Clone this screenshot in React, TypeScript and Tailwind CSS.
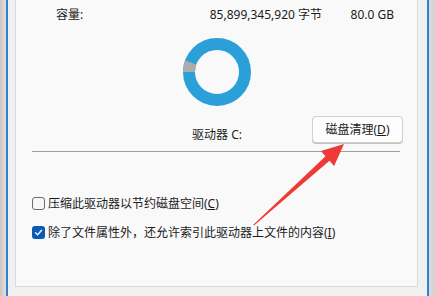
import React from "react";

const font = { fontFamily: '"Noto Sans", "Noto Sans CJK SC", sans-serif' };

function Donut() {
  // used space blue, a small free-space wedge in gray on the left
  const cx = 34;
  const cy = 34;
  const ro = 34;
  const ri = 22;
  const a0 = (180 * Math.PI) / 180;
  const a1 = (160 * Math.PI) / 180;
  const p = (r: number, a: number) => `${cx + r * Math.cos(a)} ${cy + r * Math.sin(-a)}`;
  const wedge = `M ${p(ro, a1)} A ${ro} ${ro} 0 0 0 ${p(ro, a0)} L ${p(ri, a0)} A ${ri} ${ri} 0 0 1 ${p(ri, a1)} Z`;
  return (
    <svg width="68" height="68" viewBox="0 0 68 68">
      <circle cx={cx} cy={cy} r={28} fill="none" stroke="#2a9fd8" strokeWidth={12} />
      <path d={wedge} fill="#ababab" transform="scale(1,1)" />
    </svg>
  );
}

function Check({ checked }: { checked: boolean }) {
  return checked ? (
    <span className="w-[13px] h-[13px] rounded-[3px] bg-[#0a5bb5] flex items-center justify-center">
      <svg width="9" height="9" viewBox="0 0 9 9">
        <path d="M1.5 4.8 L3.6 6.8 L7.6 2.2" fill="none" stroke="#fff" strokeWidth="1.3" strokeLinecap="round" strokeLinejoin="round" />
      </svg>
    </span>
  ) : (
    <span className="w-[13px] h-[13px] rounded-[3px] border border-[#6b6b6b] bg-[#f7f7f7]" />
  );
}

export default function App() {
  return (
    <div className="relative w-[435px] h-[296px] overflow-hidden flex text-[12px] text-[#1b1b1b]" style={font}>
      {/* window edge */}
      <div className="w-[6px] bg-gradient-to-r from-[#cbc6c1] to-[#e2dfdc]" />
      <div className="w-[2px] bg-[#2f7fd8]" />

      <div className="flex-1 bg-[#f0f0f0] pl-[7px] pr-[9px] pb-[9px] flex flex-col">
        <div className="flex-1 bg-[#f9f9f9] border border-t-0 border-[#dadada] flex flex-col">
          {/* capacity */}
          <div className="h-[30px] flex items-center pl-[40px] pr-[23px]">
            <span className="flex-1">容量:</span>
            <span className="w-[150px] text-right">85,899,345,920 字节</span>
            <span className="w-[72px] text-right">80.0 GB</span>
          </div>

          <div className="mt-[8px] flex justify-center">
            <Donut />
          </div>

          {/* drive + cleanup */}
          <div className="mt-[10px] h-[27px] grid grid-cols-[1fr_auto_1fr] items-end">
            <div />
            <span className="leading-[16px] pl-[1px]">驱动器 C:</span>
            <div className="flex justify-end pr-[14px] h-[27px]">
              <button className="w-[91px] h-[27px] rounded-[4px] border border-[#d0d0d0] bg-[#fdfdfd] shadow-[0_1px_0_#c4c4c4]">
                磁盘清理(<span className="underline">D</span>)
              </button>
            </div>
          </div>

          <div className="mt-[8px] ml-[16px] mr-[17px] h-px bg-[#a0a0a0]" />

          <div className="mt-[45px] ml-[16px] flex items-center gap-[3px] h-[13px]">
            <Check checked={false} />
            <span>
              压缩此驱动器以节约磁盘空间(<span className="underline">C</span>)
            </span>
          </div>
          <div className="mt-[16px] ml-[16px] flex items-center gap-[3px] h-[13px]">
            <Check checked />
            <span>
              除了文件属性外，还允许索引此驱动器上文件的内容(<span className="underline">I</span>)
            </span>
          </div>
        </div>
      </div>

      <div className="w-[2px] bg-[#2f7fd8]" />
      <div className="w-[6px] bg-gradient-to-r from-[#dcdcdc] to-[#d2d2d2]" />

      {/* red annotation arrow */}
      <svg className="absolute inset-0 pointer-events-none" width="435" height="296" viewBox="0 0 435 296">
        <polygon
          points="253,225 325.5,156.2 320.9,151 344,144 334.1,166 329.5,160.8 254,225.5"
          fill="#ee3a36"
        />
      </svg>
    </div>
  );
}
